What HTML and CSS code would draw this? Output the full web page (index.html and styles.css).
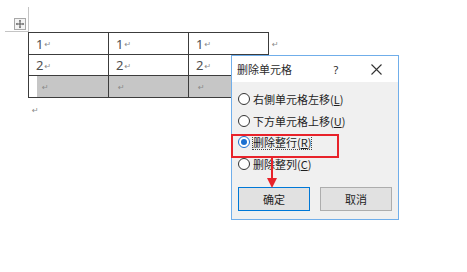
FILE: index.html
```html
<!DOCTYPE html>
<html>
<head>
<meta charset="utf-8">
<link rel="stylesheet" href="styles.css">
</head>
<body>
<div class="page">
  <div class="doc">
    <div class="table-wrap">
      <span class="mark-v"></span>
      <span class="mark-h"></span>
      <span class="handle"><svg width="12" height="12" viewBox="0 0 12 12"><rect x="0.5" y="0.5" width="11" height="11" fill="#f4f4f4" stroke="#a8a8a8"/><path d="M6 2.5V9.5M2.5 6H9.5" stroke="#555" stroke-width="1"/><path d="M6 1.8L4.8 3.3H7.2Z M6 10.2L4.8 8.7H7.2Z M1.8 6L3.3 4.8V7.2Z M10.2 6L8.7 4.8V7.2Z" fill="#555"/></svg></span>
      <div class="table">
        <div class="cell r1">1<span class="ret">↵</span></div>
        <div class="cell r1">1<span class="ret">↵</span></div>
        <div class="cell r1">1<span class="ret">↵</span></div>
        <div class="cell r2">2<span class="ret">↵</span></div>
        <div class="cell r2">2<span class="ret">↵</span></div>
        <div class="cell r2">2<span class="ret">↵</span></div>
        <div class="cell r3 sel sel-first"><span class="ret">↵</span></div>
        <div class="cell r3 sel"><span class="ret">↵</span></div>
        <div class="cell r3 sel"><span class="ret">↵</span></div>
      </div>
      <div class="row-ends">
        <span class="end r1"><span class="ret">↵</span></span>
      </div>
    </div>
    <div class="para"><span class="ret">↵</span></div>
  </div>

  <div class="dialog">
    <div class="titlebar">
      <span class="title">删除单元格</span>
      <span class="help">?</span>
      <span class="close"><svg width="11" height="11" viewBox="0 0 11 11"><path d="M0.5 0.5L10.5 10.5M10.5 0.5L0.5 10.5" stroke="#333" stroke-width="1.1"/></svg></span>
    </div>
    <div class="body">
      <div class="options">
        <div class="opt"><span class="radio"></span><span class="label">右側单元格左移(<u>L</u>)</span></div>
        <div class="opt"><span class="radio"></span><span class="label">下方单元格上移(<u>U</u>)</span></div>
        <div class="opt"><span class="radio on"></span><span class="label focus">删除整行(<u>R</u>)</span></div>
        <div class="opt"><span class="radio"></span><span class="label">删除整列(<u>C</u>)</span></div>
      </div>
      <div class="buttons">
        <span class="btn default">确定</span>
        <span class="btn">取消</span>
      </div>
    </div>
  </div>

  <div class="highlight"></div>
  <svg class="arrow" width="14" height="32" viewBox="0 0 14 32"><path d="M7 0V24" stroke="#e8222a" stroke-width="2"/><path d="M2 21L7 31L12 21Z" fill="#e8222a"/></svg>
</div>
</body>
</html>
```
FILE: styles.css
```css
* { box-sizing: border-box; }
html, body { margin: 0; padding: 0; background: #fff; }
.page {
  position: relative;
  width: 467px;
  height: 272px;
  overflow: hidden;
  background: #fff;
  padding: 32px 0 0 28px;
  font-family: "Noto Sans CJK SC", "Noto Sans", sans-serif;
}
.table-wrap {
  position: relative;
  display: flex;
  align-items: flex-start;
  gap: 2px;
}
.mark-v {
  position: absolute;
  left: 0;
  top: -25px;
  width: 1px;
  height: 25px;
  background: #c4c4c4;
}
.mark-h {
  position: absolute;
  left: -23px;
  top: -1px;
  width: 23px;
  height: 1px;
  background: #c4c4c4;
}
.handle {
  position: absolute;
  left: -14px;
  top: -14px;
  width: 12px;
  height: 12px;
  display: block;
  line-height: 0;
}
.table {
  display: grid;
  grid-template-columns: repeat(3, 80px);
  border-left: 1px solid #3c3c3c;
  border-top: 1px solid #3c3c3c;
}
.cell {
  border-right: 1px solid #3c3c3c;
  border-bottom: 1px solid #3c3c3c;
  padding-left: 7px;
  display: flex;
  align-items: center;
  font-size: 13px;
  color: #505050;
  font-family: "Noto Sans", "Liberation Sans", sans-serif;
}
.r1 { height: 22px; }
.r2 { height: 21px; }
.r3 { height: 22px; }
.sel { background: #c6c6c6; padding-left: 8px; }
.sel-first { background: linear-gradient(to right, #fff 8px, #c6c6c6 8px); padding-left: 12px; }
.ret {
  font-size: 8px;
  color: #8a8a8a;
  margin-left: 1px;
  position: relative;
  top: 1px;
  font-family: "DejaVu Sans", sans-serif;
}
.row-ends { display: flex; flex-direction: column; }
.end { display: flex; align-items: center; }
.para { padding-left: 3px; margin-top: 4px; height: 14px; display: flex; align-items: center; }

.dialog {
  position: absolute;
  left: 231px;
  top: 55px;
  width: 168px;
  height: 165px;
  border: 1px solid #70aeea;
  background: #f0f0f0;
  display: flex;
  flex-direction: column;
}
.titlebar {
  height: 26px;
  background: #fff;
  display: flex;
  align-items: center;
  padding-left: 5px;
  font-size: 11px;
  color: #2b2b2b;
}
.title { flex: 1; }
.help { width: 10px; margin-right: 30px; text-align: center; font-family: "Noto Sans", sans-serif; font-size: 11px; }
.close { width: 11px; height: 11px; margin-right: 16px; line-height: 0; }
.body {
  flex: 1;
  padding: 6px 0 0 6px;
  font-size: 11px;
  color: #1e1e1e;
}
.options { display: grid; grid-auto-rows: 21.7px; }
.opt { display: flex; align-items: center; }
.radio {
  width: 12px;
  height: 12px;
  border-radius: 50%;
  border: 1px solid #333;
  background: #fff;
  margin-right: 3px;
  flex: none;
  position: relative;
}
.radio.on { border-color: #1a6fd0; }
.radio.on::after {
  content: "";
  position: absolute;
  left: 2px;
  top: 2px;
  width: 6px;
  height: 6px;
  border-radius: 50%;
  background: #1a6fd0;
}
.label { line-height: 14px; border: 1px solid transparent; margin-left: -1px; }
.label.focus { border: 1px dotted #444; }
.buttons {
  display: flex;
  gap: 10px;
  margin-top: 12px;
}
.btn {
  width: 72px;
  height: 24px;
  display: flex;
  align-items: center;
  justify-content: center;
  background: #e1e1e1;
  border: 1px solid #adadad;
  font-size: 11px;
  color: #1e1e1e;
}
.btn.default { border-color: #0078d7; }

.highlight {
  position: absolute;
  left: 231px;
  top: 134px;
  width: 108px;
  height: 24px;
  border: 2px solid #e8222a;
}
.arrow {
  position: absolute;
  left: 265px;
  top: 157px;
}
```
